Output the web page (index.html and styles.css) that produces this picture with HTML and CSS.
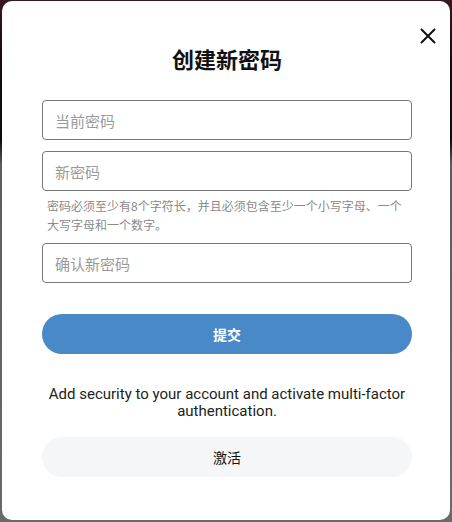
FILE: index.html
```html
<!DOCTYPE html>
<html lang="zh-CN">
<head>
<meta charset="utf-8">
<title>创建新密码</title>
<link rel="stylesheet" href="styles.css">
</head>
<body>
<div class="modal">
  <button class="close" aria-label="关闭">
    <svg width="16" height="16" viewBox="0 0 16 16"><path d="M1 1L15 15M15 1L1 15" stroke="#111" stroke-width="2" fill="none"/></svg>
  </button>
  <h1 class="title">创建新密码</h1>
  <form class="form">
    <input class="field" type="password" placeholder="当前密码">
    <input class="field" type="password" placeholder="新密码">
    <p class="hint">密码必须至少有8个字符长，并且必须包含至少一个小写字母、一个大写字母和一个数字。</p>
    <input class="field" type="password" placeholder="确认新密码">
    <button class="submit" type="button">提交</button>
  </form>
  <p class="mfa-text">Add security to your account and activate multi-factor authentication.</p>
  <button class="activate" type="button">激活</button>
</div>
</body>
</html>
```
FILE: styles.css
```css
html, body {
  margin: 0;
  padding: 0;
}
body {
  width: 452px;
  height: 522px;
  overflow: hidden;
  background: linear-gradient(to bottom, #3a1820 0px, #160b0e 60px, #0c0c0c 140px, #5e5e5e 165px, #6a6a6a 522px);
  font-family: Roboto, "Noto Sans CJK SC", sans-serif;
}
.modal {
  position: relative;
  box-sizing: border-box;
  margin: 1px 2px 0;
  height: 519px;
  background: #fff;
  border-radius: 10px;
  padding: 43px 38px 0 40px;
  display: flex;
  flex-direction: column;
}
.close {
  position: absolute;
  top: 19px;
  right: 6px;
  width: 32px;
  height: 32px;
  border: 0;
  background: transparent;
  padding: 0;
  display: flex;
  align-items: center;
  justify-content: center;
  cursor: pointer;
}
.title {
  margin: 0;
  font-family: "Noto Sans CJK SC", sans-serif;
  font-size: 22px;
  line-height: 28px;
  font-weight: 700;
  color: #111;
  text-align: center;
}
.form {
  margin-top: 28px;
  display: flex;
  flex-direction: column;
}
.field {
  box-sizing: border-box;
  height: 40px;
  width: 100%;
  border: 1px solid #777;
  border-radius: 4px;
  padding: 0 12px;
  font-family: "Noto Sans CJK SC", sans-serif;
  font-size: 15px;
  color: #222;
  background: #fff;
  outline: none;
}
.field + .field {
  margin-top: 11px;
}
.field::placeholder {
  color: #9a9a9a;
}
.hint {
  margin: 5px 0 9px;
  padding: 0 0 0 5px;
  font-family: "Noto Sans CJK SC", sans-serif;
  font-size: 12px;
  line-height: 19px;
  color: #8a8a8a;
}
.submit {
  margin-top: 31px;
  height: 40px;
  border: 0;
  border-radius: 20px;
  background: #4a89c8;
  color: #fff;
  font-family: "Noto Sans CJK SC", sans-serif;
  font-size: 14px;
  font-weight: 700;
  cursor: pointer;
}
.mfa-text {
  margin: 32px 0 0;
  font-size: 15px;
  line-height: 17px;
  color: #222;
  text-align: center;
}
.activate {
  margin-top: 17px;
  height: 40px;
  border: 0;
  border-radius: 20px;
  background: #f5f6f8;
  color: #111;
  font-family: "Noto Sans CJK SC", sans-serif;
  font-size: 14px;
  cursor: pointer;
}
```
